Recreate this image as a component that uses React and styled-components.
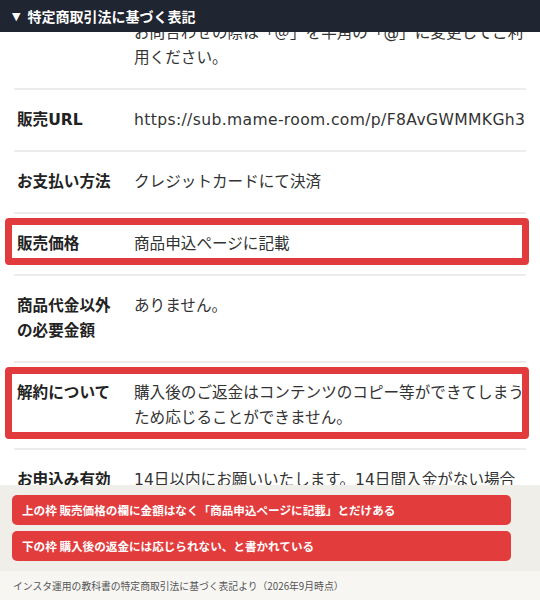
import React from "react"
import styled, { createGlobalStyle } from "styled-components"

const GlobalStyle = createGlobalStyle`
  html, body {
    margin: 0;
    padding: 0;
    background: #ffffff;
  }
  body {
    font-family: "DejaVu Sans", "Noto Sans CJK JP", sans-serif;
  }
`

const Page = styled.div`
  width: 540px;
  height: 600px;
  display: flex;
  flex-direction: column;
  overflow: hidden;
  background: #ffffff;
`

const Header = styled.div`
  height: 32px;
  flex: none;
  display: flex;
  align-items: center;
  padding-left: 12px;
  background: #1f2631;
  color: #ffffff;
  font-size: 14px;
  font-weight: 700;

  span {
    font-size: 11px;
    margin-right: 7px;
  }
`

const Viewport = styled.div`
  flex: 1;
  min-height: 0;
  overflow: hidden;
  padding: 0 14px;
`

// scroll offset of the page in the screenshot
const Table = styled.div`
  margin-top: -54px;
`

const Row = styled.div`
  position: relative;
  display: flex;
  gap: 15px;
  padding: 17.5px 0 17.5px 3px;
  border-bottom: 2px solid #ececec;
  font-size: 15.6px;
  line-height: 25px;

  &::after {
    content: "";
    display: ${(p) => (p.$marked ? "block" : "none")};
    position: absolute;
    top: 4px;
    bottom: 9px;
    left: -9px;
    right: -3px;
    border: 7px solid #e23b3d;
    border-radius: 4px;
    pointer-events: none;
  }
`

const Label = styled.div`
  width: 102px;
  flex: none;
  font-weight: 700;
  color: #222222;
`

const Value = styled.div`
  flex: 1;
  min-width: 0;
  overflow: hidden;
  color: #333333;
`

const Line = styled.div`
  white-space: nowrap;
  letter-spacing: ${(p) => (p.$latin ? "0.35px" : "0")};
`

const Panel = styled.div`
  flex: none;
  display: flex;
  flex-direction: column;
  gap: 6px;
  padding: 10px 29px 10px 12px;
  background: #efeee9;
`

const Note = styled.div`
  height: 30px;
  display: flex;
  align-items: center;
  padding-left: 10px;
  border-radius: 5px;
  background: #e23c3d;
  color: #ffffff;
  font-family: "Noto Sans CJK JP", sans-serif;
  font-size: 11.6px;
  font-weight: 700;
`

const Footer = styled.div`
  height: 29px;
  flex: none;
  display: flex;
  align-items: center;
  padding-left: 13px;
  background: #f7f6f3;
  color: #555555;
  font-family: "Noto Sans CJK JP", sans-serif;
  font-size: 9.8px;
`

const rows = [
  {
    label: "お問合わせ先",
    lines: [
      "メールアドレス：info＠mame-room.com",
      "お問合わせの際は「＠」を半角の「@」に変更してご利",
      "用ください。",
    ],
  },
  {
    label: "販売URL",
    lines: ["https://sub.mame-room.com/p/F8AvGWMMKGh3"],
    latin: true,
  },
  { label: "お支払い方法", lines: ["クレジットカードにて決済"] },
  { label: "販売価格", lines: ["商品申込ページに記載"], marked: true },
  { label: "商品代金以外の必要金額", lines: ["ありません。"] },
  {
    label: "解約について",
    lines: [
      "購入後のご返金はコンテンツのコピー等ができてしまう",
      "ため応じることができません。",
    ],
    marked: true,
  },
  {
    label: "お申込み有効期限",
    lines: [
      "14日以内にお願いいたします。14日間入金がない場合",
      "は、キャンセルとさせていただきます。",
    ],
  },
]

export default function App() {
  return (
    <>
      <GlobalStyle />
      <Page>
        <Header>
          <span>▼</span>特定商取引法に基づく表記
        </Header>
        <Viewport>
          <Table>
            {rows.map((row) => (
              <Row key={row.label} $marked={row.marked}>
                <Label>{row.label}</Label>
                <Value>
                  {row.lines.map((line) => (
                    <Line key={line} $latin={row.latin}>
                      {line}
                    </Line>
                  ))}
                </Value>
              </Row>
            ))}
          </Table>
        </Viewport>
        <Panel>
          <Note>上の枠 販売価格の欄に金額はなく「商品申込ページに記載」とだけある</Note>
          <Note>下の枠 購入後の返金には応じられない、と書かれている</Note>
        </Panel>
        <Footer>インスタ運用の教科書の特定商取引法に基づく表記より（2026年9月時点）</Footer>
      </Page>
    </>
  )
}
